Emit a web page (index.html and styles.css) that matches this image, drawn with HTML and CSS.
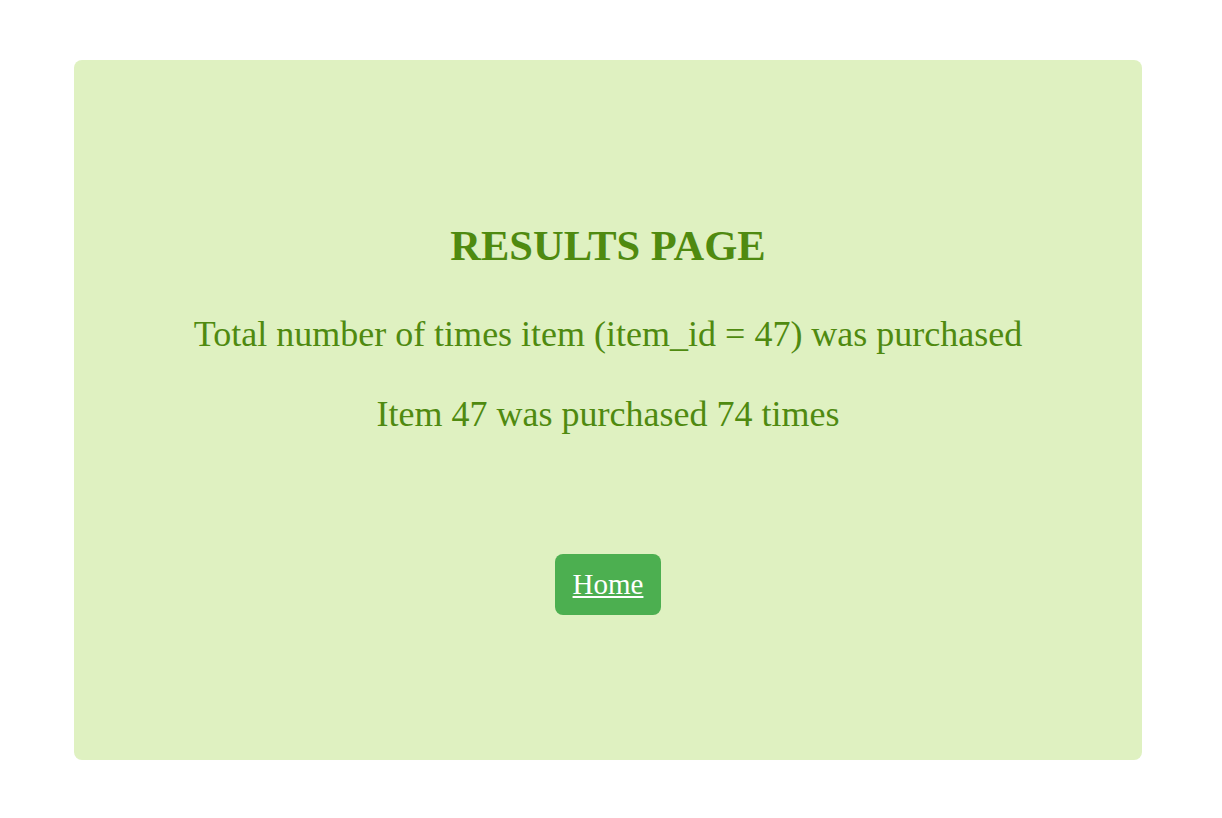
FILE: index.html
```html
<!DOCTYPE html>
<html lang="en">
<head>
<meta charset="utf-8">
<title>Results Page</title>
<link rel="stylesheet" href="styles.css">
</head>
<body>
  <main class="card">
    <h1 class="title">RESULTS PAGE</h1>
    <p class="text">Total number of times item (item_id = 47) was purchased</p>
    <p class="text result">Item 47 was purchased 74 times</p>
    <a class="home-btn" href="#">Home</a>
  </main>
</body>
</html>
```

FILE: styles.css
```css
html, body {
  margin: 0;
  padding: 0;
  background: #ffffff;
}

body {
  font-family: "Liberation Serif", "Times New Roman", serif;
  padding-top: 60px;
}

.card {
  box-sizing: border-box;
  margin: 0 80px 0 74px;
  height: 700px;
  padding-top: 162px;
  background: #dff1c1;
  border-radius: 8px;
  display: flex;
  flex-direction: column;
  align-items: center;
  color: #4f8a10;
}

.title {
  margin: 0;
  font-size: 42.5px;
  line-height: 48px;
  font-weight: bold;
}

.text {
  margin: 44px 0 0;
  font-size: 36px;
  line-height: 40px;
}

.result {
  margin-top: 40px;
}

.home-btn {
  margin-top: 120px;
  display: inline-block;
  background: #4caf50;
  color: #ffffff;
  font-size: 29px;
  line-height: 32px;
  padding: 14px 18px 15px;
  border-radius: 8px;
  text-decoration: underline;
}
```
